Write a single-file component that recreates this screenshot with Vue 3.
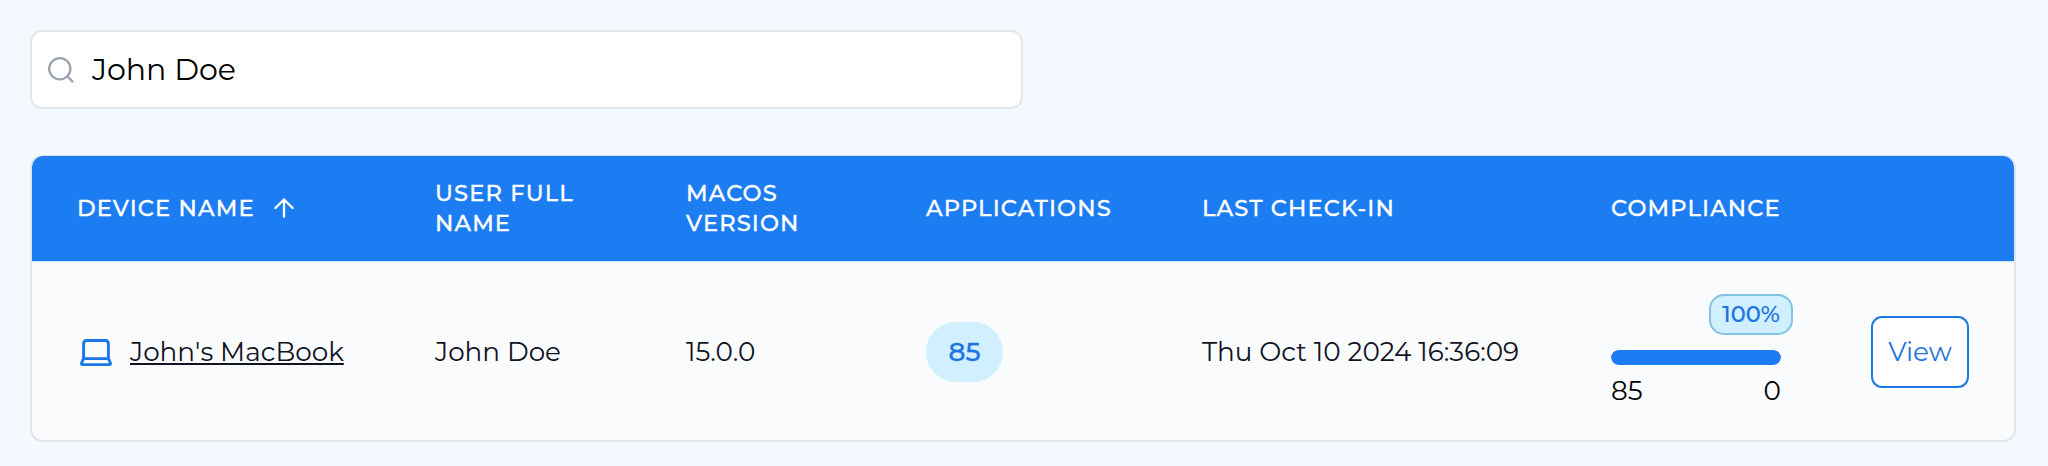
<script setup>
import { ref } from 'vue'

const query = ref('John Doe')
const columns = ['Device Name', 'User Full Name', 'macOS Version', 'Applications', 'Last Check-in', 'Compliance', '']
const devices = [
  { name: "John's MacBook", user: 'John Doe', version: '15.0.0', apps: 85, seen: 'Thu Oct 10 2024 16:36:09', passed: 85, failed: 0 }
]
const percent = (d) => Math.round((d.passed / (d.passed + d.failed)) * 100)
</script>

<template>
  <main class="page">
    <label class="search">
      <svg class="search-icon" viewBox="0 0 26 26" fill="none" stroke="currentColor" stroke-width="2.3" stroke-linecap="round">
        <circle cx="11.8" cy="11.8" r="10.6" />
        <path d="M19.4 19.4 L24.5 24.5" />
      </svg>
      <input v-model="query" class="search-input" type="text" />
    </label>

    <section class="table">
      <div class="row head">
        <div v-for="(c, i) in columns" :key="i" class="cell">
          <span class="title">{{ c }}</span>
          <svg v-if="i === 0" class="arrow" viewBox="0 0 20 20" fill="none" stroke="currentColor" stroke-width="2.3" stroke-linecap="round" stroke-linejoin="round">
            <path d="M10 18.7 V1.5 M1.4 10 L10 1.5 L18.6 10" />
          </svg>
        </div>
      </div>

      <div v-for="d in devices" :key="d.name" class="row body">
        <div class="cell device">
          <svg class="laptop" viewBox="0 0 32 28" fill="none" stroke="currentColor" stroke-width="2.9" stroke-linejoin="round">
            <path d="M3.6 19.6 V4.8 Q3.6 1.5 7 1.5 H25 Q28.4 1.5 28.4 4.8 V19.6 Z" />
            <path d="M3.6 19.6 L1.7 23.7 Q1 25.6 2.8 25.6 H29.2 Q31 25.6 30.3 23.7 L28.4 19.6" />
          </svg>
          <a class="link">{{ d.name }}</a>
        </div>
        <div class="cell">{{ d.user }}</div>
        <div class="cell">{{ d.version }}</div>
        <div class="cell"><span class="count">{{ d.apps }}</span></div>
        <div class="cell">{{ d.seen }}</div>
        <div class="cell">
          <div class="compliance">
            <div class="percent">{{ percent(d) }}%</div>
            <div class="track"><div class="fill" :style="{ width: percent(d) + '%' }"></div></div>
            <div class="totals"><span>{{ d.passed }}</span><span>{{ d.failed }}</span></div>
          </div>
        </div>
        <div class="cell"><button class="view" type="button">View</button></div>
      </div>
    </section>
  </main>
</template>

<style>
body { background: #f4f9ff; }
</style>

<style scoped>
.page {
  box-sizing: border-box;
  height: 466px;
  padding: 30px 32px 0 30px;
  background: #f4f9ff;
  font-family: Montserrat, Inter, "Open Sans", sans-serif;
  font-size: 26.25px;
  color: #12141f;
}
.search {
  box-sizing: border-box;
  display: flex;
  align-items: center;
  width: 993px;
  height: 79px;
  padding: 0 15px 0 16px;
  border: 2px solid #e4e7ea;
  border-radius: 12px;
  background: #fff;
}
.search-icon { flex: none; width: 26px; height: 26px; color: #9ca3af; margin-top: 0; }
.search-input {
  flex: 1;
  margin: 0 0 0 18px;
  padding: 0;
  border: 0;
  outline: 0;
  background: transparent;
  font: 400 30px/40px Montserrat, Inter, "Open Sans", sans-serif;
  color: #000;
}
.table {
  box-sizing: border-box;
  width: 1986px;
  height: 287px;
  margin-top: 46px;
  border: 2px solid #e2e5e9;
  border-top: 1px solid #d3e2f2;
  border-radius: 13px;
  background: #f9fbfd;
  overflow: hidden;
}
.row {
  display: grid;
  grid-template-columns: 358px 251px 240px 276px 409px 260px 188px;
  align-items: center;
}
.cell {
  box-sizing: border-box;
  display: flex;
  align-items: center;
  padding-left: 45px;
  white-space: nowrap;
}
.head {
  box-sizing: border-box;
  height: 105px;
  padding-bottom: 2px;
  background: #1c7cf2;
  color: #fff;
  font-size: 22.6px;
  line-height: 30px;
  font-weight: 500;
  letter-spacing: 0.05em;
  text-transform: uppercase;
  -webkit-text-stroke: 0.3px currentColor;
}
.head .cell:nth-child(2), .head .cell:nth-child(3) { padding-right: 56px; white-space: normal; }
.arrow { width: 20px; height: 20px; margin-left: 19px; }
.body { height: 179px; padding-top: 2px; border-top: 1px solid #c9e3fb; box-sizing: border-box; }
.laptop { flex: none; width: 32px; height: 28px; margin: 1px 18px 0 3px; color: #1b76e8; }
.link { text-decoration: underline; text-decoration-thickness: 2px; text-underline-offset: 2px; }
.count {
  display: flex;
  align-items: center;
  justify-content: center;
  width: 77px;
  height: 60px;
  margin-top: -1px;
  border-radius: 30px;
  background: #d0f0ff;
  color: #1f74e0;
  font-weight: 500;
  -webkit-text-stroke: 0.3px currentColor;
}
.compliance { display: flex; flex-direction: column; width: 170px; color: #000; }
.percent {
  box-sizing: border-box;
  align-self: flex-end;
  width: 84px;
  height: 41px;
  margin: -1px -12px 0 0;
  border: 2px solid #82c3e2;
  border-radius: 15px;
  background: #d0f0ff;
  color: #1c74e2;
  font-size: 22.5px;
  line-height: 37px;
  font-weight: 500;
  text-align: center;
  -webkit-text-stroke: 0.2px currentColor;
}
.track { height: 15px; margin-top: 15px; border-radius: 8px; background: #e5e7eb; overflow: hidden; }
.fill { height: 100%; border-radius: 8px; background: #1c7cf2; }
.totals { display: flex; justify-content: space-between; margin-top: 8px; line-height: 37px; }
.view {
  box-sizing: border-box;
  width: 98px;
  height: 72px;
  padding: 0;
  border: 2px solid #1f78e4;
  border-radius: 11px;
  background: #fff;
  color: #1f74dc;
  font: 400 26.25px/36px Montserrat, Inter, "Open Sans", sans-serif;
}
</style>
